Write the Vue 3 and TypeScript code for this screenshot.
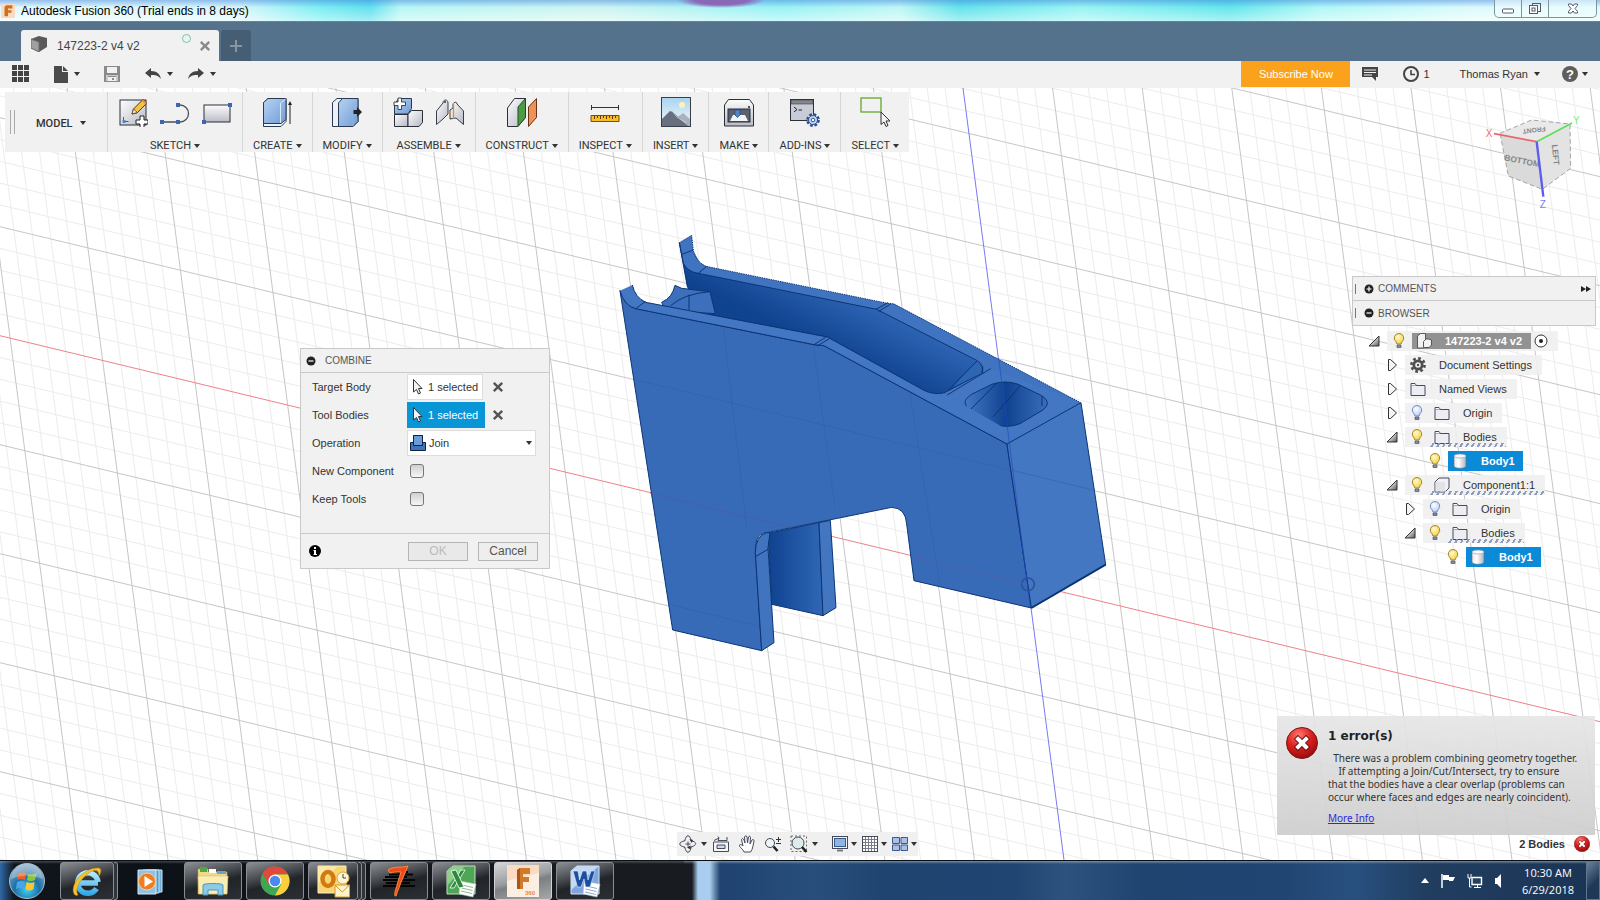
<script setup lang="ts">
import { ref } from 'vue'

interface ToolGroup {
  label: string
  icons: string[]
}

interface TreeRow {
  level: number
  label: string
  open: 'open' | 'closed' | 'none'
  bulb: 'on' | 'off' | 'none'
  icon: string
  selected?: boolean
  root?: boolean
  hatched?: boolean
}

interface TaskItem {
  name: string
  icon: string
  state: 'plain' | 'open' | 'active'
  stack: number
  badge?: string
}

const groups: ToolGroup[] = [
  { label: 'SKETCH', icons: ['sketch', 'arc', 'rect'] },
  { label: 'CREATE', icons: ['create'] },
  { label: 'MODIFY', icons: ['modify'] },
  { label: 'ASSEMBLE', icons: ['assemble', 'joint'] },
  { label: 'CONSTRUCT', icons: ['construct'] },
  { label: 'INSPECT', icons: ['inspect'] },
  { label: 'INSERT', icons: ['insert'] },
  { label: 'MAKE', icons: ['make'] },
  { label: 'ADD-INS', icons: ['addins'] },
  { label: 'SELECT', icons: ['select'] },
]

const rows: TreeRow[] = [
  { level: 0, label: '147223-2 v4 v2', open: 'open', bulb: 'on', icon: 'doc3d', root: true },
  { level: 1, label: 'Document Settings', open: 'closed', bulb: 'none', icon: 'gear' },
  { level: 1, label: 'Named Views', open: 'closed', bulb: 'none', icon: 'folder' },
  { level: 1, label: 'Origin', open: 'closed', bulb: 'off', icon: 'folder' },
  { level: 1, label: 'Bodies', open: 'open', bulb: 'on', icon: 'folder', hatched: true },
  { level: 2, label: 'Body1', open: 'none', bulb: 'on', icon: 'body', selected: true },
  { level: 1, label: 'Component1:1', open: 'open', bulb: 'on', icon: 'component', hatched: true },
  { level: 2, label: 'Origin', open: 'closed', bulb: 'off', icon: 'folder' },
  { level: 2, label: 'Bodies', open: 'open', bulb: 'on', icon: 'folder', hatched: true },
  { level: 3, label: 'Body1', open: 'none', bulb: 'on', icon: 'body', selected: true },
]

const tasks: TaskItem[] = [
  { name: 'Internet Explorer', icon: 'ie', state: 'open', stack: 1 },
  { name: 'Media Player', icon: 'wmp', state: 'plain', stack: 0 },
  { name: 'Explorer', icon: 'explorer', state: 'open', stack: 0 },
  { name: 'Chrome', icon: 'chrome', state: 'open', stack: 0 },
  { name: 'Outlook', icon: 'outlook', state: 'open', stack: 2 },
  { name: 'Seven', icon: 'seven', state: 'open', stack: 0 },
  { name: 'Excel', icon: 'excel', state: 'open', stack: 0 },
  { name: 'Fusion 360', icon: 'fusion', state: 'active', stack: 0, badge: '360' },
  { name: 'Word', icon: 'word', state: 'open', stack: 0 },
]

const operation = ref('Join')
const newComponent = ref(false)
const keepTools = ref(false)

// Ground grid in orthographic projection: two families of parallel lines.
const TOP = 88
const BOTTOM = 860
function gridPath(major: boolean): string {
  let d = ''
  for (let k = -60; k <= 40; k++) {
    if ((k % 5 === 0) !== major || k === 0) continue
    const x = 963 + k * 17.92
    d += `M${x.toFixed(1)} ${TOP}L${(x + 101).toFixed(1)} ${BOTTOM}`
  }
  for (let k = -32; k <= 26; k++) {
    if ((k % 5 === 0) !== major || k === 0) continue
    const y = 335.7 + k * 21.8
    d += `M0 ${y.toFixed(1)}L1600 ${(y + 386).toFixed(1)}`
  }
  return d
}
const minorGrid = gridPath(false)
const majorGrid = gridPath(true)
</script>

<template>
  <div class="app">
    <svg class="sprite" aria-hidden="true">
      <defs>
        <linearGradient id="g-blue" x1="0" y1="0" x2="1" y2="1">
          <stop offset="0" stop-color="#b9d3f2" /><stop offset="1" stop-color="#6e9cd6" />
        </linearGradient>
        <linearGradient id="g-grey" x1="0" y1="0" x2="1" y2="1">
          <stop offset="0" stop-color="#fff" /><stop offset="1" stop-color="#b4b8c4" />
        </linearGradient>
        <linearGradient id="g-greyv" x1="0" y1="0" x2="0" y2="1">
          <stop offset="0" stop-color="#fdfdfd" /><stop offset="1" stop-color="#b9bcc6" />
        </linearGradient>
        <linearGradient id="g-sky" x1="0" y1="0" x2="0" y2="1">
          <stop offset="0" stop-color="#a9d4ee" /><stop offset="1" stop-color="#f3f8fa" />
        </linearGradient>
        <radialGradient id="g-red" cx=".4" cy=".25" r=".8">
          <stop offset="0" stop-color="#ff7a70" /><stop offset=".5" stop-color="#dd1f1f" /><stop offset="1" stop-color="#8f0a0a" />
        </radialGradient>
        <radialGradient id="g-bulb" cx=".4" cy=".35" r=".7">
          <stop offset="0" stop-color="#fffbd0" /><stop offset="1" stop-color="#f3cf3a" />
        </radialGradient>
        <radialGradient id="g-bulboff" cx=".4" cy=".35" r=".7">
          <stop offset="0" stop-color="#fff" /><stop offset="1" stop-color="#b4ccf2" />
        </radialGradient>
        <linearGradient id="g-cyl" x1="0" y1="0" x2="1" y2="0">
          <stop offset="0" stop-color="#e8e8ee" /><stop offset=".4" stop-color="#fff" /><stop offset="1" stop-color="#aeb2be" />
        </linearGradient>
        <linearGradient id="g-tri" x1="0" y1="0" x2="1" y2="1">
          <stop offset=".3" stop-color="#f4f4f4" /><stop offset="1" stop-color="#555" />
        </linearGradient>
        <radialGradient id="g-orb" cx=".5" cy=".75" r=".8">
          <stop offset="0" stop-color="#3fd0f5" /><stop offset=".45" stop-color="#1d6fa8" /><stop offset="1" stop-color="#9fb8cc" />
        </radialGradient>
        <linearGradient id="g-ie" gradientUnits="userSpaceOnUse" x1="0" y1="6" x2="0" y2="31">
          <stop offset="0" stop-color="#c4f3ff" /><stop offset="1" stop-color="#2fa5e6" />
        </linearGradient>
      </defs>

      <symbol id="i-sketch" viewBox="0 0 30 30">
        <rect x="2" y="3" width="26" height="25" fill="url(#g-grey)" stroke="#2b2f38" />
        <path d="M5.500 20v4.500h5" fill="none" stroke="#3a5fa8" /><path d="M4.500 23h3v3h-3z" fill="#5b83c8" />
        <path d="M14 17l1.500-5L25 2.500l4 3.500-10 10z" fill="#f6c33c" stroke="#4b3a1a" /><path d="M24 4l3.500 3.500 1.500-1.500-4-3.500z" fill="#e58a56" />
        <path d="M14 17l1.500-5 4 3.500z" fill="#f4e4c8" stroke="#4b3a1a" stroke-width=".7" />
        <path d="M22 19h4v4h4v4h-4v3.500h-4V27h-4v-4h4z" fill="#fff" stroke="#222" />
      </symbol>
      <symbol id="i-arc" viewBox="0 0 30 30">
        <path d="M2 25h18a8.500 8.500 0 0 0 0-17" fill="none" stroke="#4b4f5a" stroke-width="1.300" />
        <path d="M0 23h4v4H0zM16 23h4v4h-4zM16 6h4v4h-4z" fill="#3f63b5" />
      </symbol>
      <symbol id="i-rect" viewBox="0 0 30 30">
        <rect x="2" y="8" width="26" height="17" fill="url(#g-greyv)" stroke="#2b2f38" />
        <path d="M0 23h4v4H0zM26 6h4v4h-4z" fill="#3f63b5" />
      </symbol>
      <symbol id="i-create" viewBox="0 0 30 30">
        <path d="M1.500 5.500L6 1.500h18v23l-5 5H1.500z" fill="#f3f5f9" stroke="#2b3a52" />
        <path d="M1.500 5.500L6 1.500h18v21l-5 4H1.500z" fill="url(#g-blue)" stroke="#2b3a52" />
        <path d="M18.500 6v20M18.500 6l5-4" fill="none" stroke="#dce9f8" />
        <path d="M28 27V6" stroke="#222" /><path d="M28 4l2 4h-4z" fill="#222" />
      </symbol>
      <symbol id="i-modify" viewBox="0 0 30 30">
        <path d="M.5 5.500L5 1.500h21v23l-5 5H.5z" fill="#eef2f8" stroke="#2b3a52" />
        <path d="M6.500 6l4-4.500h15.500v23l-5 5H6.500z" fill="url(#g-blue)" stroke="#2b3a52" />
        <path d="M21 6v23" stroke="#8fb2de" />
        <path d="M21.500 13h3.500v-3l5 5-5 5v-3h-3.500z" fill="#222" />
      </symbol>
      <symbol id="i-assemble" viewBox="0 0 30 30">
        <path d="M1.500 17V8l4-6.500h13v10L15 17z" fill="url(#g-blue)" stroke="#2b3a52" />
        <path d="M1.500 17.500h13.500v12H1.500z" fill="url(#g-grey)" stroke="#2b2f38" />
        <path d="M15 17.500l3.500-4h11v12l-3.500 4H15z" fill="url(#g-grey)" stroke="#2b2f38" />
        <path d="M5 1h3.500v4h4v3.500h-4v4H5v-4H1V5h4z" fill="#fff" stroke="#333" stroke-width=".9" />
      </symbol>
      <symbol id="i-joint" viewBox="0 0 30 30">
        <path d="M1.500 27.500V14L8 6c0-4 5-4 5 0v11l-5 5z" fill="url(#g-grey)" stroke="#3a3e48" />
        <path d="M28.500 27.500V14L22 7c0-3-4-2-4 1v3l-3 2v9l6-1z" fill="url(#g-grey)" stroke="#3a3e48" />
        <path d="M18.500 6v16M15 15v3" stroke="#d98b4e" stroke-width="1.300" /><circle cx="10" cy="5" r="1" fill="#333" />
      </symbol>
      <symbol id="i-construct" viewBox="0 0 30 30">
        <path d="M.5 11l7-9.500h11v19l-8 9H.5z" fill="url(#g-grey)" stroke="#2b2f38" />
        <path d="M11 10l7.500-8.500v19L11 29.500z" fill="#4f9a45" stroke="#1e4a1c" />
        <path d="M21.500 10l8-8.500v19l-8 9z" fill="#ef9257" stroke="#6a3216" />
      </symbol>
      <symbol id="i-inspect" viewBox="0 0 30 30">
        <path d="M1.500 8v5M28.500 8v5M1.500 10.500h27" stroke="#333" />
        <path d="M1 18.500h28v6H1z" fill="#f7bd23" stroke="#7a4c10" />
        <path d="M4.500 19v3M7.500 19v2M10.500 19v3M13.500 19v2M16.500 19v3M19.500 19v2M22.500 19v3M25.500 19v2" stroke="#5c3a0c" />
      </symbol>
      <symbol id="i-insert" viewBox="0 0 30 30">
        <rect x=".5" y=".5" width="29" height="29" fill="url(#g-sky)" stroke="#3a3e48" />
        <circle cx="21" cy="8" r="3" fill="#fdf3b8" />
        <path d="M14 22l8-6 7 6v7H14z" fill="#a8b2bf" /><path d="M1 22l8-8 3 1 15 14H1z" fill="#68707f" />
        <path d="M12 15l4 5 9 6" fill="none" stroke="#dfe4ea" stroke-width=".8" />
      </symbol>
      <symbol id="i-make" viewBox="0 0 30 30">
        <path d="M.5 8l4-5.500h21l4 5.500v21H.5z" fill="url(#g-greyv)" stroke="#2b2f38" />
        <rect x="4" y="12" width="22" height="13" fill="#5b616e" stroke="#2b2f38" /><path d="M6 24l3-6h12l3 6z" fill="#f3f4f7" />
        <path d="M11 13h5v5l-2.500 2.500L11 18z" fill="#4f86cf" stroke="#24477c" stroke-width=".7" /><circle cx="25" cy="10" r="1" fill="#222" />
      </symbol>
      <symbol id="i-addins" viewBox="0 0 30 30">
        <rect x=".5" y="2.500" width="23" height="21" fill="#c9cbd6" stroke="#2b2f38" /><path d="M1 3h22v4H1z" fill="#84868c" stroke="#3a3e48" stroke-width=".6" />
        <path d="M4 10l3 2.500L4 15M8.500 13H12" fill="none" stroke="#222" />
        <circle cx="23" cy="23" r="5.500" fill="#dfe9f8" stroke="#2c4f8c" stroke-width="2.600" stroke-dasharray="2.700 1.600" />
        <circle cx="23" cy="23" r="4.500" fill="#c5d6f0" stroke="#2c4f8c" /><circle cx="23" cy="23" r="1.800" fill="#fff" stroke="#2c4f8c" />
      </symbol>
      <symbol id="i-select" viewBox="0 0 30 30">
        <rect x="1" y="1" width="20" height="14" fill="none" stroke="#62a828" stroke-width="1.300" />
        <path d="M21 15v12.500l3-2.500 2 4.500 2-1-2-4.500h4z" fill="#f3f3f3" stroke="#333" />
      </symbol>

      <symbol id="i-bulb-on" viewBox="0 0 14 18">
        <path d="M7 1.500a4.600 4.600 0 0 0-3 8.200L5 12h4l1-2.300a4.600 4.600 0 0 0-3-8.200z" fill="url(#g-bulb)" stroke="#a5852a" />
        <path d="M5 13h4v2.500H5z" fill="#8b91a8" stroke="#4c5270" stroke-width=".7" />
      </symbol>
      <symbol id="i-bulb-off" viewBox="0 0 14 18">
        <path d="M7 1.500a4.600 4.600 0 0 0-3 8.200L5 12h4l1-2.300a4.600 4.600 0 0 0-3-8.200z" fill="url(#g-bulboff)" stroke="#6f8fc8" />
        <path d="M5 13h4v2.500H5z" fill="#7d86a8" stroke="#4c5270" stroke-width=".7" />
      </symbol>
      <symbol id="i-folder" viewBox="0 0 18 18">
        <path d="M2 5.500h14v10H2z" fill="#eceef4" stroke="#474b5c" /><path d="M2 5.500v-2h4l1.500 2" fill="#fff" stroke="#474b5c" />
      </symbol>
      <symbol id="i-gear" viewBox="0 0 18 18">
        <circle cx="9" cy="9" r="6.600" fill="none" stroke="#4e4e4e" stroke-width="2.600" stroke-dasharray="2.700 2.480" />
        <circle cx="9" cy="9" r="4.200" fill="none" stroke="#4e4e4e" stroke-width="2.800" /><circle cx="9" cy="9" r="1.200" fill="#4e4e4e" />
      </symbol>
      <symbol id="i-doc3d" viewBox="0 0 18 18">
        <path d="M2.500 15V4l3-2.500h5V7h3l3 1v5l-2.500 2.500h-5V16H2.500z" fill="#f2f2f4" stroke="#55585f" />
        <path d="M8.500 15.500v-6l2.500-2.500" fill="none" stroke="#55585f" />
      </symbol>
      <symbol id="i-body" viewBox="0 0 18 18">
        <path d="M3 4v10c0 3 12 3 12 0V4z" fill="url(#g-cyl)" stroke="#5c7186" stroke-width=".6" />
        <ellipse cx="9" cy="4" rx="6" ry="2" fill="#f8f8fb" stroke="#8a95a6" stroke-width=".6" />
      </symbol>
      <symbol id="i-component" viewBox="0 0 18 18">
        <path d="M2 6l4-4h10v10l-4 4H2z" fill="#f0f1f5" stroke="#474b5c" /><path d="M2.500 6h9.500v9.500H2.500z" fill="#e2e3e9" />
      </symbol>
      <symbol id="i-cursor" viewBox="0 0 12 18">
        <path d="M1.500 1.500v12.500l3-2.500 2 4.500 2-1-2-4.500H10z" fill="#f4f4f4" stroke="#333" />
      </symbol>
      <symbol id="i-x" viewBox="0 0 10 10"><path d="M1.500 1.500l7 7M8.500 1.500l-7 7" stroke="currentColor" stroke-width="2" /></symbol>
      <symbol id="i-plus" viewBox="0 0 10 10"><circle cx="5" cy="5" r="4.500" fill="#222" /><path d="M2.500 5h5M5 2.500v5" stroke="#fff" stroke-width="1.200" /></symbol>
      <symbol id="i-minus" viewBox="0 0 10 10"><circle cx="5" cy="5" r="4.500" fill="#222" /><path d="M2.500 5h5" stroke="#fff" stroke-width="1.200" /></symbol>
      <symbol id="i-error" viewBox="0 0 32 32">
        <circle cx="16" cy="16" r="15.500" fill="url(#g-red)" stroke="#7d1414" />
        <path d="M12 12l8 8M20 12l-8 8" stroke="#6b1010" stroke-width="6" stroke-linecap="square" /><path d="M12 12l8 8M20 12l-8 8" stroke="#fff" stroke-width="4" stroke-linecap="square" />
      </symbol>

      <symbol id="n-orbit" viewBox="0 0 18 18">
        <path d="M6 12.200C-1 11-1 7 6 5.800M12 5.800c7 1.200 6 5.200-2 6.600M5.800 6C7-1 11-1 12.200 6M12.200 12C11 19 7 19 5.800 12" fill="none" stroke="#444a5a" />
        <path d="M9 6.500v5M6.500 9h5" stroke="#444a5a" /><path d="M11.500 10.500l-3.500 2 3.500 2zM10.500 4l3.500 1-1.500 3z" fill="#333" />
      </symbol>
      <symbol id="n-look" viewBox="0 0 18 18">
        <path d="M1.500 7h15v9.500h-15z" fill="#f6f6f8" stroke="#444a5a" /><path d="M5 10h8v3.500H5z" fill="#d6d8e2" stroke="#444a5a" />
        <path d="M2 5.500L7 3l-1-1.500M7 3L6 5.500h9V2" fill="none" stroke="#444a5a" />
      </symbol>
      <symbol id="n-hand" viewBox="0 0 18 18">
        <path d="M6 17c-1-3-5-5-4.500-7C2.500 9 4 10 5 11L3.500 4.500C4 3 5.500 3.500 6 5l1 3-.5-6C7 .5 8.500.5 9 2l.5 6 1-6c.5-1.200 2-1 2 .5L12 9l2-4c1-1 2.200-.3 2 1-1 4-1 8-3.500 11z" fill="#fff" stroke="#444a5a" />
      </symbol>
      <symbol id="n-zoom" viewBox="0 0 18 18">
        <circle cx="6" cy="8" r="4.500" fill="#eef3f4" stroke="#444a5a" /><path d="M9.500 11.500l4 4.500" stroke="#222" stroke-width="2.600" />
        <path d="M12 4.500h5M14.500 2v5M12 8.500h5" stroke="#333" />
      </symbol>
      <symbol id="n-fit" viewBox="0 0 18 18">
        <path d="M1 1h15.500v15.500H1z" fill="none" stroke="#666" stroke-dasharray="2 2" />
        <circle cx="8" cy="8" r="6" fill="#dfeaea" stroke="#444a5a" /><path d="M12 12l4.500 5" stroke="#222" stroke-width="2.600" />
      </symbol>
      <symbol id="n-display" viewBox="0 0 18 18">
        <rect x="1.500" y="1.500" width="15" height="12" fill="#f2f2f5" stroke="#444a5a" /><rect x="3.500" y="3.500" width="11" height="8" fill="#8fb5e6" stroke="#39598c" />
        <path d="M6 14.500h6v2H6z" fill="#777c8c" />
      </symbol>
      <symbol id="n-grid" viewBox="0 0 18 18">
        <rect x="1.500" y="1.500" width="15" height="15" fill="#fff" stroke="#444a5a" />
        <path d="M4.500 2v14M7.500 2v14M10.500 2v14M13.500 2v14M2 4.500h14M2 7.500h14M2 10.500h14M2 13.500h14" stroke="#777c8c" />
      </symbol>
      <symbol id="n-views" viewBox="0 0 18 18">
        <path d="M1.500 2.500h7v6h-7zM10 2.500h6.500v6H10zM1.500 10h7v5.500h-7zM10 10h6.500v5.500H10z" fill="#a9c1e8" stroke="#3c5688" />
      </symbol>

      <symbol id="t-ie" viewBox="0 0 34 34">
        <path d="M28 19H10M26.500 24.500A10.200 10.200 0 1 1 28 18" fill="none" stroke="url(#g-ie)" stroke-width="5.500" />
        <path d="M5 31C-2 24 12 3 29 4c3 1 2 5 0 8 0-9-8-6-15 1C8 19 5 26 8 31c-1 .5-2 .5-3 0z" fill="#f4c22f" stroke="#b98511" stroke-width=".5" />
      </symbol>
      <symbol id="t-wmp" viewBox="0 0 34 34">
        <path d="M12 6h16v22H12z" fill="#6fb1dc" stroke="#c6e4f5" /><path d="M9 6h16v23H9z" fill="#4e9bd0" stroke="#c6e4f5" />
        <path d="M4 6h18v24H4z" fill="#8cc3e6" stroke="#d4ecf8" /><circle cx="13" cy="17.500" r="8.500" fill="#f07d22" stroke="#fbd0a0" /><path d="M10.500 12l8.500 5.500-8.500 5.500z" fill="#fff" />
      </symbol>
      <symbol id="t-explorer" viewBox="0 0 34 34">
        <path d="M2 5h10v3h19v22H2z" fill="#efd98a" stroke="#b99a4a" stroke-width=".6" /><path d="M4 3h7v5H4z" fill="#4fa844" /><path d="M13 5h7v4h-7z" fill="#fff" /><path d="M21 7h9v3h-9z" fill="#5fa6dd" />
        <path d="M2 12h30l-1 18H3z" fill="#fbeeb4" stroke="#d8bd6a" stroke-width=".6" />
        <path d="M7 31V21c0-2 20-2 20 0v10h-5v-5H12v5z" fill="#8ccbe8" stroke="#4b96c4" />
      </symbol>
      <symbol id="t-chrome" viewBox="0 0 34 34">
        <circle cx="17" cy="17" r="14.500" fill="#3fa652" /><path d="M4.500 9.700A14.500 14.500 0 0 1 30 10.500H17z" fill="#df4a3c" /><path d="M4.500 9.700A14.500 14.500 0 0 1 17 2.500v8l-6 10z" fill="#df4a3c" />
        <path d="M30 10.500A14.500 14.500 0 0 1 17 31.500l6-11-6-10z" fill="#fbcf3a" /><circle cx="17" cy="17" r="6.500" fill="#fff" /><circle cx="17" cy="17" r="5.200" fill="#4a8af0" />
      </symbol>
      <symbol id="t-outlook" viewBox="0 0 34 34">
        <path d="M2 2h28v27H2z" fill="#f9d675" stroke="#fdf0c0" /><path d="M2 2h20L2 20z" fill="#fce9a8" />
        <ellipse cx="12" cy="15" rx="5.500" ry="7" fill="none" stroke="#d17a10" stroke-width="4.500" />
        <circle cx="27" cy="14" r="6" fill="#fff4d8" stroke="#dba83c" /><path d="M27 10v4h3" fill="none" stroke="#444" />
        <path d="M19 21h14.500v12H19z" fill="#fff3c8" stroke="#d09a30" /><path d="M19 21l7.200 7 7.300-7" fill="none" stroke="#d09a30" />
      </symbol>
      <symbol id="t-seven" viewBox="0 0 34 34">
        <path d="M10 8h16M7 10.500h24M3 13h22M1 16h32M4 19h24M1 22h32" stroke="#050505" stroke-width="1.800" />
        <path d="M6 6c5-4 13-2 20-4-3 7-8 18-12 30-2 0-1-1-1-4 2-7 4-14 6-20-5 0-8 0-11 1z" fill="#f04a1c" stroke="#ff8a3c" />
      </symbol>
      <symbol id="t-excel" viewBox="0 0 34 34">
        <path d="M3 7l6-5h22v28H3z" fill="#4fa656" stroke="#bfe3bf" /><path d="M3 7l6-5h12L3 22z" fill="#8fce8b" />
        <path d="M16 17l16 3-3 13-14-3z" fill="#fff" stroke="#9bc69b" stroke-width=".6" /><path d="M18 21l11 2.500M17.500 24l11 2.500M17 27l11 2.500" stroke="#8fb98f" />
        <path d="M21 6h-4L6 24h4z" fill="#2b8a3c" stroke="#fff" stroke-width=".8" /><path d="M7 7l5-1 8 17-5 1z" fill="#2b8a3c" stroke="#fff" stroke-width=".8" />
      </symbol>
      <symbol id="t-fusion" viewBox="0 0 34 34">
        <path d="M1 1h32v32H1z" fill="#fbdcc2" /><path d="M1 17l32-8v24H1z" fill="#fdeee2" />
        <path d="M11 6l3-2h10v6h-7v3h6v5h-6v7h-6z" fill="#d07a2a" /><path d="M11 6l3-2v21h-3z" fill="#a9561a" />
      </symbol>
      <symbol id="t-word" viewBox="0 0 34 34">
        <path d="M3 7l6-5h22v28H3z" fill="#7fa6dc" stroke="#d5e4f8" /><path d="M3 7l6-5h22L3 26z" fill="#c3d9f5" />
        <path d="M16 17l16 3-3 13-14-3z" fill="#fff" stroke="#9bb3d6" stroke-width=".6" /><path d="M18 22l11 2.500M17.500 25l11 2.500M17 28l11 2.500" stroke="#8fa8cf" />
        <path d="M5 7h5l1.500 9 3-9h4l1.500 9 3-9h4l-5 16h-4.500l-1.500-8-3 8H9.500z" fill="#1d4fa0" stroke="#e4eefb" stroke-width=".6" />
      </symbol>
    </svg>

    <header class="titlebar">
      <svg class="app-icon" viewBox="0 0 16 16" aria-hidden="true">
        <path d="M0 0h16v16H0z" fill="#fbdcc2" /><path d="M4 3l2-1.500h7V5H8v2h4v3H8v4H4z" fill="#d0701c" />
      </svg>
      <span class="title">Autodesk Fusion 360 (Trial ends in 8 days)</span>
      <div class="win-buttons">
        <button type="button" aria-label="Minimize"><svg viewBox="0 0 14 14"><rect x="1.500" y="7" width="11" height="4" rx="1" fill="#fff" stroke="#555a6a" /></svg></button>
        <button type="button" aria-label="Restore"><svg viewBox="0 0 14 14"><rect x="4.500" y="1.500" width="8" height="8" fill="none" stroke="#555a6a" /><rect x="1.500" y="3.500" width="8" height="8" fill="#fff" stroke="#555a6a" /><rect x="4" y="6" width="3" height="3" fill="#fff" stroke="#555a6a" /></svg></button>
        <button type="button" class="close" aria-label="Close"><svg viewBox="0 0 14 14"><path d="M2.500 2h3L7 4l1.500-2h3v1.500L9 6.500l2.500 3V11h-3L7 9l-1.500 2h-3V9.500l2.500-3-2.500-3z" fill="#fff" stroke="#555a6a" /></svg></button>
      </div>
    </header>

    <nav class="tabs" aria-label="Documents">
      <div class="tab">
        <svg class="tab-cube" viewBox="0 0 16 16"><path d="M0 3l8-3 8 2v9l-8 5-8-4z" fill="#5a5a5a" /><path d="M0 3l8 3v10l-8-4z" fill="#a0a0a0" stroke="#6a6a6a" /></svg>
        <span class="tab-name">147223-2 v4 v2</span>
        <i class="tab-status"></i>
        <button type="button" class="tab-close" aria-label="Close tab"><svg width="12" height="12"><use href="#i-x" /></svg></button>
      </div>
      <button type="button" class="tab-new" aria-label="New tab"><svg viewBox="0 0 12 12" width="12" height="12"><path d="M0 6h12M6 0v12" stroke="#8696a5" stroke-width="2" /></svg></button>
    </nav>

    <div class="quickbar">
      <button type="button" class="q-grid" aria-label="Data panel">
        <svg viewBox="0 0 18 18" width="18" height="18"><path d="M0 0h5v5H0zM6 0h5v5H6zM12 0h5v5h-5zM0 6h5v5H0zM6 6h5v5H6zM12 6h5v5h-5zM0 12h5v5H0zM6 12h5v5H6zM12 12h5v5h-5z" fill="#444" /></svg>
      </button>
      <button type="button" class="q-file" aria-label="File">
        <svg viewBox="0 0 14 17" width="14" height="17"><path d="M0 0h8v6h6v11H0z" fill="#4a4a4a" /><path d="M9 0l5 5H9z" fill="#4a4a4a" /></svg><i class="caret"></i>
      </button>
      <button type="button" class="q-save" aria-label="Save">
        <svg viewBox="0 0 16 16" width="16" height="16"><path d="M0 0h16v16H0z" fill="#8a8a8a" /><path d="M3 1h10v6H3z" fill="#f1f1f1" /><path d="M2 9h12v1H2zM2 10h2v5H2zM12 10h2v5h-2z" fill="#c9c9c9" /><path d="M4 11h8v4H4z" fill="#f1f1f1" /><path d="M8 12h2v2H8z" fill="#8a8a8a" /></svg>
      </button>
      <button type="button" class="q-undo" aria-label="Undo">
        <svg viewBox="0 0 16 12" width="16" height="12"><path d="M0 5l6-5v3c6 0 9 3 10 8-3-4-6-4-10-4v3z" fill="#444" /></svg><i class="caret"></i>
      </button>
      <button type="button" class="q-redo" aria-label="Redo">
        <svg viewBox="0 0 16 12" width="16" height="12"><path d="M16 5l-6-5v3C4 3 1 6 0 11c3-4 6-4 10-4v3z" fill="#444" /></svg><i class="caret"></i>
      </button>
      <span class="spacer"></span>
      <a class="subscribe" href="#">Subscribe Now</a>
      <button type="button" class="q-comment" aria-label="Comments">
        <svg viewBox="0 0 16 14" width="16" height="14"><path d="M0 0h16v10h-2v4l-4-4H0z" fill="#444" /><path d="M2 3h12M2 5.500h12M2 8h8" stroke="#f1f1f1" /></svg>
      </button>
      <button type="button" class="q-jobs" aria-label="Job status">
        <svg viewBox="0 0 16 16" width="16" height="16"><circle cx="8" cy="8" r="7" fill="none" stroke="#444" stroke-width="2" /><path d="M8 4v4.500h4" fill="none" stroke="#444" stroke-width="1.600" /></svg>1
      </button>
      <button type="button" class="q-user">Thomas Ryan<i class="caret"></i></button>
      <button type="button" class="q-help" aria-label="Help">
        <svg viewBox="0 0 16 16" width="16" height="16"><circle cx="8" cy="8" r="8" fill="#5e5e5e" /><text x="8" y="13" text-anchor="middle" font-family="Liberation Sans" font-size="13" font-weight="700" fill="#fff">?</text></svg><i class="caret"></i>
      </button>
    </div>

    <main class="viewport">
      <svg class="scene" viewBox="0 88 1600 772" preserveAspectRatio="xMidYMid slice" aria-label="3D model view">
        <defs>
          <linearGradient id="s-in" gradientUnits="userSpaceOnUse" x1="800" y1="250" x2="720" y2="410"><stop offset="0" stop-color="#2d64b3" /><stop offset="1" stop-color="#0f428f" /></linearGradient>
          <linearGradient id="s-hole" x1="0" y1="0" x2="1" y2="0"><stop offset="0" stop-color="#4478c4" /><stop offset=".5" stop-color="#0f428f" /><stop offset="1" stop-color="#3a6ebc" /></linearGradient>
          <linearGradient id="s-leg" x1="0" y1="0" x2="1" y2="0"><stop offset="0" stop-color="#0f428f" /><stop offset="1" stop-color="#2f67b6" /></linearGradient>
        </defs>
        <path :d="minorGrid" class="minor" />
        <path :d="majorGrid" class="major" />
        <path d="M0 335.700L1600 721.700" stroke="#f08088" />
        <path d="M963 88L1064 860" stroke="#7a7af0" />
        <g transform="translate(600 220) scale(.33333)" stroke="#0c3474" stroke-width="3" stroke-linejoin="round">
          <path d="M238 68l37-22 5 46 18 33 20 14 540 110 24 2 560 297-200 150H300L262 200z" fill="#4074c0" stroke="none" />
          <path d="M238 68l37-22 5 46q10 35 38 47l540 110 24 3 560 296" fill="none" stroke-dasharray="4 3" />
          <path d="M1148 452l24-6 270 102-220 124-250-145z" fill="#4377c3" stroke="none" />
          <path d="M262 200l-24-132 12 62q12 25 45 30l535 108 300 153q26 16 14 39l-114 60q-28 6-58-9L682 351 330 285z" fill="url(#s-in)" />
          <path d="M1060 500l70-78q18 14 14 38z" fill="#2f66b4" stroke="none" />
          <path d="M246 103l34-13M295 160l25-21M828 268l36-20M836 274l36-22" fill="none" />
          <path d="M1030 532l142-86M1045 510l86-87M1148 440v20" fill="none" />
          <path d="M185 247q32-14 40-51l20 9 85 10 16 66-150-10z" fill="#3c70bc" />
          <path d="M212 257q40-36 118-42M267 224v45" fill="none" />
          <path d="M1095 548q0-12 20-25l60-30q40-14 80 0l70 34q32 20 5 42l-70 42q-40 16-85 0l-65-38q-12-8-15-25z" fill="url(#s-hole)" />
          <path d="M1110 570l80-80M1180 590l80-92M1326 528v30" fill="none" />
          <path d="M60 212q12 45 47 54l535 108 30 3 549 295 73 492-352-82-22-170q-3-48-45-50l-385 78q-26 8-24 58l19 294-267-62z" fill="#376bb8" />
          <path d="M60 212L97 195Q105 232 137 247L682 351L972 511Q1000 525 1030 519L1240 640L1221 672L672 377L642 374L107 266Q72 257 60 212z" fill="#4377c3" stroke="none" />
          <path d="M97 195Q105 232 137 247L682 351L972 511Q1000 525 1030 519" fill="none" />
          <path d="M60 212q12 45 47 54l535 108 30 3 549 295M107 266l30-22M642 374l35-22M652 378l36-22" fill="none" />
          <path d="M1221 672l222-124 74 486-223 130z" fill="#4377c2" />
          <path d="M1294 1164l223-130" stroke-width="6" fill="none" />
          <path d="M504 940l153-32 12 279-154-34z" fill="url(#s-leg)" /><path d="M657 908l34-7 17 262-39 24z" fill="#4276c1" />
          <path d="M466 998q0-50 34-60h10l-6 45 18 285-37 24z" fill="#4074bf" /><path d="M466 1010l38-22" />
          <circle cx="1284" cy="1093" r="19" fill="none" stroke="#28549c" stroke-width="5" />
          <path d="M150 820l425 103" stroke="#57579c" fill="none" opacity=".6" />
          <path d="M943 1012l340 83" stroke="#6a5aa0" fill="none" opacity=".6" />
          <path d="M110 480l1370 330M208 1153l262 64M370 322l70 600M640 375l65 490M930 520l90 580" stroke="#2f5fa8" fill="none" opacity=".5" />
          <path d="M1196 415l94 740" stroke="#2447c8" fill="none" opacity=".65" />
        </g>
      </svg>

      <section class="ribbon" aria-label="Tools">
        <i class="grip"></i>
        <button type="button" class="workspace">MODEL<i class="caret"></i></button>
        <div v-for="g in groups" :key="g.label" class="group">
          <div class="group-icons">
            <svg v-for="n in g.icons" :key="n" width="30" height="30"><use :href="'#i-' + n" /></svg>
          </div>
          <button type="button" class="group-label">{{ g.label }}<i class="caret"></i></button>
        </div>
      </section>

      <svg class="viewcube" viewBox="852 336 300 300" aria-label="View cube">
        <path d="M900 400l95-40 115 12-100 53z" fill="#e9e9e9" /><path d="M900 400l110 25 17 143-102-40z" fill="#dadada" /><path d="M1010 425l100-53 2 133-85 63z" fill="#e3e3e3" />
        <path d="M900 400l95-40 115 12 2 133-85 63-102-40z" fill="none" stroke="#a5a5a5" stroke-width="3" stroke-dasharray="14 8" />
        <text transform="translate(912 481) rotate(11)" class="cube-text">BOTTOM</text>
        <text transform="translate(1055 434) rotate(84)" class="cube-text">LEFT</text>
        <text transform="translate(1036 380) rotate(174)" class="cube-text top">FRONT</text>
        <path d="M882 401l128 24" stroke="#e8686e" stroke-width="5" /><path d="M1010 425l106-56" stroke="#5be05b" stroke-width="5" /><path d="M1010 425l20 165" stroke="#5c5cf0" stroke-width="7" />
        <text x="857" y="410" class="axis" fill="#f07078">X</text><text x="1119" y="371" class="axis" fill="#7df07d">Y</text><text x="1019" y="625" class="axis" fill="#7c7cf6">Z</text>
      </svg>

      <form class="combine" @submit.prevent>
        <h2><svg width="10" height="10"><use href="#i-minus" /></svg>COMBINE</h2>
        <div class="fields">
          <span class="flabel">Target Body</span>
          <div class="fval"><button type="button" class="pick"><svg width="12" height="18"><use href="#i-cursor" /></svg>1 selected</button><button type="button" class="clear" aria-label="Clear target"><svg width="12" height="12"><use href="#i-x" /></svg></button></div>
          <span class="flabel">Tool Bodies</span>
          <div class="fval"><button type="button" class="pick active"><svg width="12" height="18"><use href="#i-cursor" /></svg>1 selected</button><button type="button" class="clear" aria-label="Clear tools"><svg width="12" height="12"><use href="#i-x" /></svg></button></div>
          <label class="flabel" for="operation">Operation</label>
          <div class="fval join">
            <svg class="join-icon" viewBox="0 0 16 16" width="16" height="16"><path d="M.5 7.500h3v-7h9v7h3v8H.5z" fill="#3f74bd" stroke="#10233f" /><path d="M3.500.500h9v10h-9z" fill="#6b9bdb" stroke="#10233f" /></svg>
            <select id="operation" v-model="operation"><option>Join</option><option>Cut</option><option>Intersect</option></select>
            <i class="caret"></i>
          </div>
          <label class="flabel" for="newcomp">New Component</label>
          <div class="fval"><input id="newcomp" v-model="newComponent" type="checkbox" /></div>
          <label class="flabel" for="keep">Keep Tools</label>
          <div class="fval"><input id="keep" v-model="keepTools" type="checkbox" /></div>
        </div>
        <footer>
          <svg viewBox="0 0 12 12" width="12" height="12"><circle cx="6" cy="6" r="6" fill="#000" /><path d="M5 2h2v2H5zM4.500 5H7v4h1v1H4.500V9H5V6h-.5z" fill="#fff" /></svg>
          <span class="spacer"></span>
          <button type="submit" disabled>OK</button>
          <button type="button">Cancel</button>
        </footer>
      </form>

      <aside class="side">
        <h2><i class="bars"></i><svg width="10" height="10"><use href="#i-plus" /></svg><span>COMMENTS</span>
          <svg viewBox="0 0 10 8" width="10" height="8"><path d="M0 1l5 3-5 3zM5 1l5 3-5 3z" fill="#222" /></svg>
        </h2>
        <h2><i class="bars"></i><svg width="10" height="10"><use href="#i-minus" /></svg><span>BROWSER</span></h2>
        <ul class="tree">
          <li v-for="(r, i) in rows" :key="i" :class="['lv' + r.level]">
            <span class="twist">
              <svg v-if="r.open === 'open'" viewBox="0 0 12 12" width="12" height="12"><path d="M11 1v10H1z" fill="url(#g-tri)" stroke="#333" /></svg>
              <svg v-else-if="r.open === 'closed'" viewBox="0 0 12 14" width="12" height="14"><path d="M2.500 1.500h2l6 5.500-6 5.500h-2z" fill="#f4f4f4" stroke="#333" /></svg>
            </span>
            <span class="node" :class="{ hatched: r.hatched, body: r.selected }">
              <span v-if="r.bulb !== 'none'" class="slot"><svg width="14" height="18"><use :href="'#i-bulb-' + r.bulb" /></svg></span>
              <span class="name" :class="{ root: r.root, selected: r.selected }">
                <span class="slot"><svg width="18" height="18"><use :href="'#i-' + r.icon" /></svg></span>
                <span class="txt">{{ r.label }}</span>
              </span>
              <svg v-if="r.root" class="radio" viewBox="0 0 14 14" width="14" height="14"><circle cx="7" cy="7" r="6" fill="#fff" stroke="#333" /><circle cx="7" cy="7" r="2" fill="#222" /></svg>
            </span>
          </li>
        </ul>
      </aside>

      <section class="error" role="alert">
        <svg width="32" height="32"><use href="#i-error" /></svg>
        <div>
          <h3>1 error(s)</h3>
          <p>&nbsp; There was a problem combining geometry together.<br />&nbsp; &nbsp; If attempting a Join/Cut/Intersect, try to ensure<br />that the bodies have a clear overlap (problems can<br />occur where faces and edges are nearly coincident).</p>
          <a href="#">More Info</a>
        </div>
      </section>

      <div class="status"><span>2 Bodies</span><svg width="16" height="16"><use href="#i-error" /></svg></div>

      <div class="navbar">
        <button type="button" class="orbit" aria-label="Orbit"><svg width="18" height="18"><use href="#n-orbit" /></svg><i class="caret"></i></button>
        <button type="button" aria-label="Look at"><svg width="18" height="18"><use href="#n-look" /></svg></button>
        <button type="button" aria-label="Pan"><svg width="18" height="18"><use href="#n-hand" /></svg></button>
        <button type="button" aria-label="Zoom"><svg width="18" height="18"><use href="#n-zoom" /></svg></button>
        <button type="button" class="fit" aria-label="Fit"><svg width="18" height="18"><use href="#n-fit" /></svg><i class="caret"></i></button>
        <button type="button" class="tight" aria-label="Display settings"><svg width="18" height="18"><use href="#n-display" /></svg><i class="caret"></i></button>
        <button type="button" class="tight" aria-label="Grid settings"><svg width="18" height="18"><use href="#n-grid" /></svg><i class="caret"></i></button>
        <button type="button" class="tight" aria-label="Viewports"><svg width="18" height="18"><use href="#n-views" /></svg><i class="caret"></i></button>
      </div>
    </main>

    <footer class="taskbar">
      <button type="button" class="start" aria-label="Start">
        <svg viewBox="0 0 38 38" width="38" height="38"><circle cx="19" cy="19" r="17.500" fill="url(#g-orb)" stroke="#a9bccb" />
          <path d="M10 12q4-3 8-1l-1 7q-4-2-8 0z" fill="#e8602c" /><path d="M20 12q4 2 9-1l-2 7q-4 2-8 0z" fill="#8cc63c" /><path d="M9 20q4-2 8 0l-1 7q-4-2-8 0z" fill="#4aa5e8" /><path d="M18.500 20q4 2 8 0l-1 7q-4 3-8 0z" fill="#fbc72c" />
          <path d="M3 17a16 15 0 0 1 32 0q-16-7-32 0z" fill="#fff" opacity=".3" /></svg>
      </button>
      <div class="tasks">
        <div v-for="t in tasks" :key="t.name" class="task-slot">
          <button type="button" :class="['task', t.state]" :aria-label="t.name"><svg width="34" height="34"><use :href="'#t-' + t.icon" /></svg><span v-if="t.badge" class="badge">{{ t.badge }}</span></button>
          <i v-for="n in t.stack" :key="n" class="stack"></i>
        </div>
      </div>
      <div class="band">
        <div class="tray">
          <svg viewBox="0 0 8 6" width="8" height="6"><path d="M4 0l4 5H0z" fill="#fff" /></svg>
          <svg viewBox="0 0 14 16" width="14" height="16"><path d="M1 1v14" stroke="#fff" stroke-width="1.500" /><path d="M2 2h6v2h6l-2 4H8V7H2z" fill="#fff" /></svg>
          <svg viewBox="0 0 16 16" width="16" height="16"><path d="M5 4.500h9.500v7H5z" fill="#27425f" stroke="#fff" stroke-width="1.400" /><path d="M7 14.500h7M10.500 12v2M1 1v4h3V1M2.500 5v9h2" fill="none" stroke="#fff" /></svg>
          <svg viewBox="0 0 8 14" width="8" height="14"><path d="M0 4h2l4-4v14l-4-4H0z" fill="#fff" /></svg>
        </div>
        <time class="clock">10:30 AM<br />6/29/2018</time>
        <button type="button" class="peek" aria-label="Show desktop"></button>
      </div>
    </footer>
  </div>
</template>

<style>
html, body { margin: 0; height: 100%; }
body { overflow: hidden; }
</style>

<style scoped>
.app { display: flex; flex-direction: column; height: 100vh; font-family: "Liberation Sans", Arial, sans-serif; font-size: 11px; color: #333; background: #fff; }
.app * { box-sizing: border-box; }
.sprite { position: absolute; width: 0; height: 0; }
button { font: inherit; color: inherit; border: 0; background: none; padding: 0; margin: 0; display: flex; align-items: center; }
svg { display: block; flex: none; }
h2, h3, p, ul { margin: 0; padding: 0; font-weight: 400; }
.spacer { flex: 1; }
.caret { display: inline-block; flex: none; width: 0; height: 0; border: 3px solid transparent; border-top: 4px solid #333; border-bottom: 0; }

.titlebar { display: flex; align-items: center; height: 21px; padding: 0 3px 0 1px; background:
  radial-gradient(ellipse 44px 8px at 721px 0, #8a68b8 60%, transparent),
  linear-gradient(180deg, rgba(60, 130, 220, .5), rgba(120, 230, 245, .1) 35%, rgba(255, 255, 255, .45)),
  linear-gradient(90deg, #eefcfe 0, #dff8fb 240px, #7ceff2 320px, #5fdfee 370px, #bdf8f4 400px, #d6f6f0 600px, #9cf3f5 780px, #c5f8f4 900px, #62e2ea 960px, #9df5f3 1080px, #62e6ea 1230px, #b5f9f6 1320px, #e8fdfd 1480px); }
.app-icon { width: 14px; height: 16px; }
.title { flex: 1; margin-left: 6px; font: 12px/20px "Liberation Sans", Arial, sans-serif; color: #000; }
.win-buttons { display: flex; align-self: flex-start; height: 18px; border: 1px solid #7e959c; border-top: 0; border-radius: 0 0 5px 5px; background: rgba(240, 253, 255, .6); }
.win-buttons button { width: 27px; justify-content: center; border-right: 1px solid #7e959c; }
.win-buttons .close { width: 47px; border: 0; }
.win-buttons svg { width: 14px; height: 14px; }

.tabs { display: flex; align-items: flex-end; gap: 2px; height: 40px; padding-left: 21px; background: #55728c; border-top: 1px solid #6e7f8d; }
.tab { display: flex; align-items: center; width: 198px; height: 31px; padding: 0 8px 0 10px; background: #f1f1f1; border-radius: 3px 3px 0 0; }
.tab-cube { width: 16px; height: 16px; margin-bottom: 4px; }
.tab-name { margin-left: 10px; flex: 1; font-size: 12px; color: #444; }
.tab-status { width: 9px; height: 9px; margin: 0 8px 14px 0; border: 1px solid #6fc7a4; border-radius: 50%; }
.tab-close { color: #8a8a8a; }
.tab-new { width: 30px; height: 31px; justify-content: center; background: #465e73; border-radius: 3px 3px 0 0; }

.quickbar { display: flex; align-items: center; height: 27px; padding: 0 12px 1px 12px; background: #f1f1f1; }
.quickbar button { gap: 6px; }
.q-file { margin-left: 24px; }
.q-save { margin-left: 24px; }
.q-undo { margin-left: 25px; }
.q-redo { margin-left: 15px; }
.subscribe { width: 109px; height: 26px; font: 11px/26px "Liberation Sans", Arial, sans-serif; text-align: center; color: #fff; background: #faa21b; text-decoration: none; }
.q-comment { margin-left: 12px; }
.quickbar .q-jobs { margin-left: 25px; gap: 4px; }
.q-user { margin-left: 30px; }
.q-help { margin-left: 22px; }
.quickbar .q-help { gap: 4px; }

.viewport { position: relative; flex: 1; min-height: 0; overflow: hidden; background: #fff; }
.scene { position: absolute; inset: 0; width: 100%; height: 100%; }
.minor { stroke: #ececec; fill: none; }
.major { stroke: #c6c6c6; fill: none; }

.ribbon { position: absolute; left: 5px; top: 4px; display: flex; height: 60px; background: #f1f1f1; }
.grip { align-self: center; width: 5px; height: 24px; margin-left: 5px; border: solid #aaa; border-width: 0 1px; }
.workspace { width: 92px; padding: 2px 0 0 21px; gap: 7px; font: 500 11px "Roboto", sans-serif; color: #333; }
.group { display: flex; flex-direction: column; align-items: center; justify-content: space-between; padding: 5px 10px 1px; border-left: 1px solid #d6d6d6; }
.group-icons { display: flex; gap: 12px; }
.group-label { gap: 3px; font: 11px/11px "Roboto", sans-serif; color: #333; }

.viewcube { position: absolute; top: 24px; right: 16px; width: 100px; height: 100px; }
.cube-text { font: 700 25px "Liberation Sans", Arial, sans-serif; fill: #858585; }
.cube-text.top { font-size: 20px; }
.axis { font: 30px "Liberation Sans", Arial, sans-serif; }

.combine { position: absolute; left: 300px; top: 260px; width: 250px; background: #f1f1f1; border: 1px solid #c9c9c9; }
.combine h2 { display: flex; align-items: center; gap: 9px; height: 24px; padding-left: 5px; font: 10px "Liberation Sans", Arial, sans-serif; color: #555; border-bottom: 1px solid #c9c9c9; }
.fields { display: grid; grid-template-columns: 95px 1fr; grid-auto-rows: 28px; align-items: center; padding: 0 13px 20px 11px; }
.fval { display: flex; align-items: center; }
.pick { height: 26px; padding: 0 4px; gap: 4px; background: #fff; border: 1px solid #ddd; white-space: nowrap; }
.pick.active { background: #0896d7; border-color: #0896d7; color: #fff; padding-right: 6px; }
.clear { margin-left: 9px; color: #555; }
.active + .clear { margin-left: 7px; }
.join { position: relative; height: 26px; border: 1px solid #ddd; background: #fff; }
.join-icon { position: absolute; left: 2px; pointer-events: none; }
.join .caret { position: absolute; right: 3px; pointer-events: none; }
.join select { appearance: none; width: 100%; height: 24px; padding: 0 12px 0 21px; border: 0; background: none; font: inherit; color: inherit; }
input[type="checkbox"] { appearance: none; width: 14px; height: 14px; margin: 0 0 0 3px; border: 1px solid #777; border-radius: 3px; background: linear-gradient(#d0d0d0, #f6f6f6); }
.combine footer { display: flex; align-items: center; gap: 10px; height: 35px; padding: 0 11px 0 8px; border-top: 1px solid #c9c9c9; }
.combine footer button { width: 60px; height: 19px; justify-content: center; font-size: 12px; color: #555; border: 1px solid #b5b5b5; background: #eee; }
.combine footer button:disabled { color: #bbb; background: #e9e9e9; }

.side { position: absolute; right: 4px; top: 188px; width: 244px; }
.side h2 { display: flex; align-items: center; gap: 4px; height: 25px; padding: 0 4px 0 1px; font: 10px "Liberation Sans", Arial, sans-serif; color: #555; background: #f1f1f1; border: 1px solid #c9c9c9; }
.side h2 + h2 { border-top: 0; }
.side h2 span { flex: 1; }
.bars { width: 2px; height: 10px; margin-right: 4px; border-right: 1px solid #777; }
.tree { list-style: none; padding-top: 3px; }
.tree li { display: flex; align-items: center; height: 24px; }
.lv0 { padding-left: 13px; }
.lv1 { padding-left: 31px; }
.lv2 { padding-left: 49px; }
.lv3 { padding-left: 67px; }
.twist { display: flex; justify-content: center; width: 22px; padding-right: 4px; }
.node { position: relative; display: flex; align-items: center; height: 20px; padding-right: 10px; background: rgba(240, 240, 240, .9); }
.slot { display: flex; justify-content: center; width: 24px; }
.name { display: flex; align-items: center; height: 20px; margin-left: 1px; }
.txt { margin-left: 9px; white-space: nowrap; }
.node.body { background: none; padding-right: 0; }
.selected { padding-right: 8px; font-weight: 700; color: #fff; background: #0b8ad8; }
.root { height: 16px; margin-right: 3px; padding-right: 9px; font-weight: 700; color: #fff; background: #929292; }
.hatched::after { content: ""; position: absolute; left: 24px; right: 1px; bottom: 0; height: 4px; background: repeating-linear-gradient(120deg, transparent 0 3px, #8f9cbc 3px 5px); }

.error { position: absolute; right: 5px; bottom: 25px; display: flex; gap: 10px; width: 318px; height: 119px; padding: 11px 9px; background: linear-gradient(rgba(230, 230, 230, .92), rgba(205, 205, 205, .92)); }
.error h3 { font: 700 12px/18px "DejaVu Sans", sans-serif; color: #222; }
.error p { margin-top: 7px; font: 10px/13px "Noto Sans", "DejaVu Sans", sans-serif; color: #333; white-space: nowrap; }
.error a { display: inline-block; margin-top: 6px; font: 10px/16px "Noto Sans", sans-serif; color: #2a2ad8; }

.status { position: absolute; right: 10px; bottom: 8px; display: flex; align-items: center; gap: 9px; font-weight: 700; }
.navbar { position: absolute; left: 50%; bottom: 4px; margin-left: -123px; display: flex; align-items: center; gap: 8px; height: 24px; padding: 0 5px 0 2px; background: #f0f0f0; }
.navbar button { gap: 4px; }
.navbar .orbit { margin-right: -3px; }
.navbar .tight { gap: 2px; margin-right: -4px; }
.navbar .fit { margin-right: 5px; }

.taskbar { display: flex; height: 40px; border-top: 1px solid #0b0f14; background: linear-gradient(rgba(255, 255, 255, .22), transparent 3px), linear-gradient(90deg, #2f69a8, #10161d 14px, #0c1117 150px, #181c20 600px); }
.start { width: 60px; padding-left: 8px; }
.tasks { display: flex; gap: 4px; padding-top: 1px; }
.task-slot { display: flex; width: 58px; }
.task { position: relative; flex: 1; height: 38px; justify-content: center; border: 1px solid transparent; border-radius: 3px; }
.task.open { border-color: #8a8d91; background: linear-gradient(165deg, #8b8e92, #4a4d51 35%, #212428 55%, #2c2f33); }
.task.active { border-color: #cfd1d3; background: linear-gradient(165deg, #d5d6d8, #9b9da0 45%, #7d8083 55%, #a5a7a9); }
.badge { position: absolute; right: 16px; bottom: 3px; font: 700 6px/6px "Liberation Sans", Arial, sans-serif; color: #e08a4a; }
.stack { width: 4px; height: 38px; border: solid #8a8d91; border-width: 1px 1px 1px 0; border-radius: 0 3px 3px 0; background: #303338; }
.band { display: flex; align-items: center; flex: 1; margin-left: 70px; background:
  linear-gradient(rgba(190, 210, 230, .5), transparent 3px),
  linear-gradient(90deg, transparent 0, transparent 8px, #a8cdee 14px, #a8cdee 26px, transparent 36px),
  linear-gradient(90deg, #181c20 12px, #1f4270 34px, #284f7c 130px, #204470 200px, #214572 330px, #2d527d 380px, #204470 460px, #214573 600px, #28507f 670px, #213e60 740px, #1b3455 100%); }
.tray { display: flex; align-items: center; gap: 12px; margin-left: auto; margin-right: 14px; }
.clock { width: 62px; font: 11px/17px "Open Sans", sans-serif; text-align: center; color: #fff; }
.peek { width: 14px; height: 39px; margin-left: 7px; border: 1px solid #5f7690; background: linear-gradient(135deg, #6c829b, #1e3856 60%); }
</style>
